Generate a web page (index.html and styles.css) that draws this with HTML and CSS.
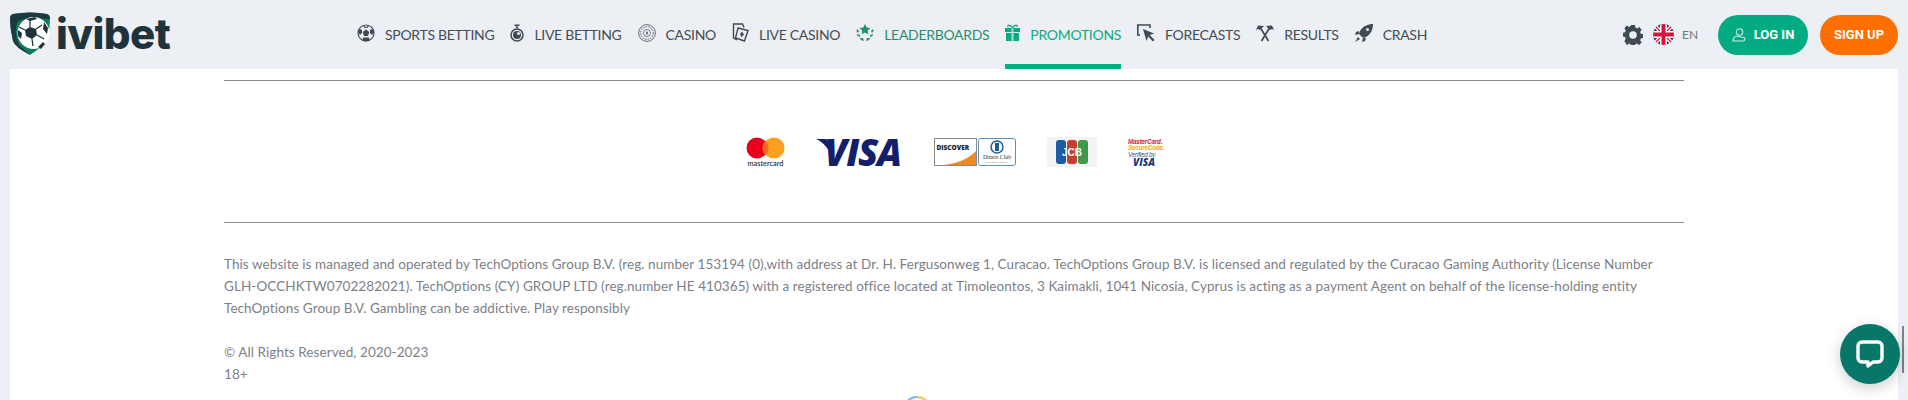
FILE: index.html
```html
<!DOCTYPE html>
<html lang="en">
<head>
<meta charset="utf-8">
<title>ivibet</title>
<link rel="stylesheet" href="styles.css">
</head>
<body>
<header class="header">
  <a class="logo">
    <svg class="logo-mark" viewBox="0 0 40 43" width="40" height="43">
      <path d="M3 2 Q20 -1 37 2 Q40 3 40 6 Q40 17 37 28 Q35 33 20 43 Q5 35 3 29 Q0 17 0 6 Q0 3 3 2Z" fill="#0c7a5d"/>
      <path d="M3 2 Q20 -1 37 2 Q40 3 40 7 L36 7 Q20 4 8 9 Q3 20 9 33 L20 43 Q5 35 3 29 Q0 17 0 6 Q0 3 3 2Z" fill="#1d3a40"/>
      <circle cx="23.500" cy="21" r="16" fill="#fff"/>
      <path d="M20 15 l6 2 l1 6 l-5 4 l-6 -3 l-1 -6Z" fill="#1f333d"/>
      <path d="M26 17 l6 -4 M15 18 l-6 -3 M22 27 l1 7 M27 23 l7 4 M20 15 l0 -8" stroke="#1f333d" stroke-width="1.300"/>
      <path d="M16 7 l9 -2 l2 2 l-7 2Z M34 10 l4 6 l-1 6 l-4 -5Z M8 18 l4 3 l-1 6 l-3 -3Z M28 35 l5 -5 l2 2 l-4 5Z" fill="#1f333d"/>
    </svg>
    <span class="logo-text">ivibet</span>
  </a>
  <nav class="nav">
    <a class="nav-item">
      <svg class="ic" viewBox="0 0 18 18" width="18" height="18"><circle cx="9" cy="9" r="8" fill="none" stroke="#3f4a52" stroke-width="1.200"/><path d="M9 5.500l3.300 2.400-1.300 4h-4l-1.300-4Z" fill="#3f4a52"/><path d="M6 1.500L9 3l3-1.500-1 2-2 .5-2-.5Z M1 8l2-3 2 1v3l-2 2Z M17 8l-2-3-2 1v3l2 2Z M5.500 16.500l.5-3h6l.5 3L9 17.500Z" fill="#3f4a52"/></svg>
      <span>SPORTS BETTING</span>
    </a>
    <a class="nav-item">
      <svg class="ic ic-live" viewBox="0 0 14 18" width="14" height="18"><circle cx="7" cy="11" r="6" fill="none" stroke="#3f4a52" stroke-width="1.500"/><circle cx="7" cy="11" r="4" fill="#3f4a52"/><circle cx="8.500" cy="9.500" r="1.600" fill="#eceff3"/><path d="M4.500 1.200h5M7 1v3.500" stroke="#3f4a52" stroke-width="1.500"/></svg>
      <span>LIVE BETTING</span>
    </a>
    <a class="nav-item">
      <svg class="ic" viewBox="0 0 18 18" width="18" height="18"><circle cx="9" cy="9" r="8.400" fill="none" stroke="#555e65" stroke-width=".9"/><circle cx="9" cy="9" r="6.300" fill="none" stroke="#555e65" stroke-dasharray="1.500 1"/><circle cx="9" cy="9" r="3.500" fill="none" stroke="#555e65" stroke-width=".8"/><path d="M9 7l1 2-1 2-1-2Z" fill="#3f4a52"/></svg>
      <span>CASINO</span>
    </a>
    <a class="nav-item">
      <svg class="ic ic-cards" viewBox="0 0 17 19" width="17" height="19"><path d="M5 17L1.500 15V1H10.500L12 4.500" fill="none" stroke="#3f4a52" stroke-width="1.400"/><path d="M6 5l10 2.500L12.500 18 3.500 15Z" fill="none" stroke="#3f4a52" stroke-width="1.400"/><path d="M10 8.500l2 3-2.500 2.500-1.500-3Z" fill="#3f4a52"/></svg>
      <span>LIVE CASINO</span>
    </a>
    <a class="nav-item nav-item-lead">
      <svg class="ic" viewBox="0 0 18 18" width="18" height="18"><path d="M9 0l1.700 3.400 3.700.5-2.700 2.600.7 3.700L9 8.500l-3.400 1.700.7-3.700L3.600 3.900l3.700-.5Z" fill="#1f9070"/><path d="M1 5l2 2-1 2-1.500-2Z M17 5l-2 2 1 2 1.500-2Z M1 10l3 1 0 2-2.500-1Z M17 10l-3 1 0 2 2.500-1Z M4 14l3 0 1 3-3-1Z M14 14l-3 0-1 3 3-1Z" fill="#1f9070"/></svg>
      <span>LEADERBOARDS</span>
    </a>
    <a class="nav-item nav-item-active">
      <svg class="ic ic-gift" viewBox="0 0 15 17" width="15" height="17"><path d="M0 4h15v4H0Z M1 9h13v8H1Z" fill="#0bab81"/><path d="M6.500 4h2v13h-2Z" fill="#a5e0cf"/><path d="M7.500 4C5 0 2 1 3 3M7.500 4C10 0 13 1 12 3" stroke="#0bab81" stroke-width="1.300" fill="none"/></svg>
      <span>PROMOTIONS</span>
    </a>
    <a class="nav-item">
      <svg class="ic" viewBox="0 0 18 18" width="18" height="18"><path d="M3 11H.800V1H13v3" fill="none" stroke="#3f4a52" stroke-width="1.600"/><path d="M6 5l11 4.500-4.300 1.600 4.800 5-1.500 1.500-4.800-5L9.500 17Z" fill="#3f4a52"/></svg>
      <span>FORECASTS</span>
    </a>
    <a class="nav-item">
      <svg class="ic" viewBox="0 0 18 18" width="18" height="18"><path d="M4.500 4L12.500 17M13.500 4L5.500 17" stroke="#3f4a52" stroke-width="1.700"/><path d="M0 6L2 1.500 8 2 7 3 4 6 2 5Z M18 6l-2-4.500L10 2l1 1 3 3 2-1Z" fill="#3f4a52"/></svg>
      <span>RESULTS</span>
    </a>
    <a class="nav-item">
      <svg class="ic" viewBox="0 0 18 18" width="18" height="18"><path d="M5 7C8 2 13 0 18 0 18 5 16 10 11 13L8 14 4 10Z" fill="#3f4a52"/><circle cx="12.500" cy="5.500" r="1.500" fill="#eceff3"/><path d="M4 7L1 8l-1 3 4-1Z M11 14l-1 3-3 1 1-4Z M3 13l-3 5 5-3Z" fill="#3f4a52"/></svg>
      <span>CRASH</span>
    </a>
  </nav>
  <div class="tools">
    <svg class="gear" viewBox="0 0 20 20" width="20" height="20"><path d="M8 0h4l.5 2.600 1.800.8 2.300-1.500 2.500 2.800-1.600 2.200.8 1.900 2.700.4v3.700l-2.700.5-.8 1.800 1.600 2.300-2.800 2.600-2.200-1.600-1.800.8-.4 2.700H8l-.5-2.700-1.800-.8-2.200 1.600L.9 16l1.500-2.300-.8-1.800L-1 11.400V7.700l2.600-.4.8-1.900L.9 3.200l2.600-2.800 2.200 1.500 1.800-.8Z" transform="translate(0.500 0) scale(.95 1)" fill="#3f4a52"/><circle cx="10" cy="10" r="3.800" fill="#eceff3"/></svg>
    <svg class="flag" viewBox="0 0 21 21" width="21" height="21">
      <defs><clipPath id="flagclip"><circle cx="10.500" cy="10.500" r="10.500"/></clipPath></defs>
      <g clip-path="url(#flagclip)">
        <rect width="21" height="21" fill="#25356f"/>
        <path d="M0 0L21 21M21 0L0 21" stroke="#fff" stroke-width="4"/>
        <path d="M0 0L21 21M21 0L0 21" stroke="#d3173b" stroke-width="1.300"/>
        <path d="M10.500 0V21M0 10.500H21" stroke="#fff" stroke-width="7"/>
        <path d="M10.500 0V21M0 10.500H21" stroke="#d3173b" stroke-width="4"/>
      </g>
    </svg>
    <span class="lang">EN</span>
    <a class="btn btn-login">
      <svg viewBox="0 0 14 14" width="14" height="14"><circle cx="7.500" cy="4" r="3.200" fill="none" stroke="#cfeee5" stroke-width="1.100"/><path d="M1 13c0-3 2-5 4-5l4 1 3 .5c1.500 1 1 3.500-1 3.500Z" fill="none" stroke="#cfeee5" stroke-width="1.100"/></svg>
      <span>LOG IN</span>
    </a>
    <a class="btn btn-signup">SIGN UP</a>
  </div>
</header>
<main class="main">
  <div class="container">
    <hr class="rule">
    <div class="payments">
      <svg class="pay" viewBox="0 0 39 30" width="39" height="30">
        <circle cx="11" cy="11" r="10.500" fill="#eb001b"/>
        <circle cx="28" cy="11" r="10.500" fill="#f9a01f"/>
        <path d="M19.500 3.600a10.500 10.500 0 0 1 0 14.800a10.500 10.500 0 0 1 0-14.800Z" fill="#f26a1b"/>
        <text x="19.500" y="28.500" class="t-mc" text-anchor="middle">mastercard</text>
      </svg>
      <svg class="pay" viewBox="0 -12 87 52" width="87" height="52">
        <path d="M0 1h9c2 0 3 1 3.500 3L16 21C14 11 7 4 0 1Z" fill="#141f6b"/>
        <text x="8.500" y="27.500" class="t-visa">VISA</text>
      </svg>
      <div class="pay-pair">
        <svg viewBox="0 0 43 28" width="43" height="28">
          <rect x=".5" y=".5" width="42" height="27" fill="#fff" stroke="#8a8a8a"/>
          <path d="M42 13V27H10Q32 24 42 13Z" fill="#f08a24"/>
          <text x="2.500" y="12" class="t-disc">DISCOVER</text>
        </svg>
        <svg viewBox="0 0 38 28" width="38" height="28">
          <rect x=".5" y=".5" width="37" height="27" rx="2" fill="#fff" stroke="#5b8fb5"/>
          <circle cx="19" cy="9" r="6" fill="#fff" stroke="#1d5d99" stroke-width="1.500"/>
          <rect x="17" y="5" width="4" height="8" fill="#1d5d99"/>
          <text x="19" y="20.500" class="t-din" text-anchor="middle">Diners Club</text>
          <text x="19" y="25" class="t-din2" text-anchor="middle">INTERNATIONAL</text>
        </svg>
      </div>
      <svg class="pay" viewBox="0 0 50 30" width="50" height="30">
        <rect width="50" height="30" rx="2" fill="#f3f3f3"/>
        <rect x="9" y="3" width="10" height="24" rx="3" fill="#1d5aa5"/>
        <rect x="20" y="3" width="10" height="24" rx="3" fill="#c6402f"/>
        <rect x="31" y="3" width="10" height="24" rx="3" fill="#3c9a4b"/>
        <text x="25" y="19" class="t-jcb" text-anchor="middle">JCB</text>
      </svg>
      <svg class="pay pay-sc" viewBox="-4 -6 42 42" width="42" height="42">
        <text x="0" y="6.500" class="t-sc t-sc-red">MasterCard.</text>
        <text x="0" y="13" class="t-sc t-sc-yel">SecureCode.</text>
        <text x="0" y="20" class="t-sc t-sc-blue">Verified by</text>
        <text x="5" y="29" class="t-sc-visa">VISA</text>
      </svg>
    </div>
    <hr class="rule">
    <div class="legal">
      <p class="legal-main">This website is managed and operated by TechOptions Group B.V. (reg. number 153194 (0),with address at Dr. H. Fergusonweg 1, Curacao. TechOptions Group B.V. is licensed and regulated by the Curacao Gaming Authority (License Number GLH-OCCHKTW0702282021). TechOptions (CY) GROUP LTD (reg.number HE 410365) with a registered office located at Timoleontos, 3 Kaimakli, 1041 Nicosia, Cyprus is acting as a payment Agent on behalf of the license-holding entity TechOptions Group B.V. Gambling can be addictive. Play responsibly</p>
      <p class="legal-copy">© All Rights Reserved, 2020-2023</p>
      <p class="legal-copy">18+</p>
    </div>
    <div class="seal-row">
      <svg viewBox="0 0 28 28" width="28" height="28"><circle cx="14" cy="14" r="13" fill="#fff" stroke="#6db8ea" stroke-width="2"/><path d="M14 1a13 13 0 0 1 12 8" fill="none" stroke="#f3cf6b" stroke-width="2.500"/></svg>
    </div>
  </div>
</main>
<div class="scroll-thumb"></div>
<button class="chat" aria-label="Chat">
  <svg viewBox="0 0 30 30" width="30" height="30"><path d="M7 3h16a4 4 0 0 1 4 4v12a4 4 0 0 1-4 4h-5l-5 4v-4H7a4 4 0 0 1-4-4V7a4 4 0 0 1 4-4Z" fill="none" stroke="#fff" stroke-width="3.400" stroke-linejoin="round"/></svg>
</button>
</body>
</html>
```
FILE: styles.css
```css
* { box-sizing: border-box; }
html, body { margin: 0; height: 400px; overflow: hidden; }
body { background: #eceff3; font-family: Lato, "Open Sans", sans-serif; position: relative; }

.header { height: 69px; display: flex; align-items: center; padding: 0 10px; }
.logo { display: flex; align-items: center; gap: 6px; width: 347px; margin-top: -2px; }
.logo-mark { flex: none; }
.logo-text { font-family: Inter, sans-serif; font-weight: 800; font-size: 42px; line-height: 1; letter-spacing: -.6px; color: #1f333d; }

.nav { display: flex; height: 69px; gap: 16px; }
.nav-item { display: flex; align-items: center; gap: 10px; height: 69px; font-size: 14px; letter-spacing: -.3px; color: #444d54; border-bottom: 5px solid transparent; padding-top: 5px; white-space: nowrap; }
.nav-item .ic { flex: none; margin-top: -4px; }
.nav-item-lead { color: #1f9070; }
.nav-item-active { color: #0bab81; border-bottom-color: #04ab82; }

.tools { margin-left: auto; display: flex; align-items: center; }
.gear { margin-right: 10px; }
.flag { margin-right: 8px; }
.lang { font-size: 12px; color: #6f767d; width: 36px; }
.btn { height: 40px; border-radius: 20px; display: flex; align-items: center; justify-content: center; gap: 8px; font-family: Roboto, sans-serif; font-weight: 700; font-size: 13px; color: #fff; }
.btn-login { width: 90px; background: #04ab82; margin-right: 12px; }
.btn-signup { width: 78px; background: #ff6f00; }

.main { background: #fff; margin: 0 10px; height: 331px; overflow: hidden; }
.container { margin: 0 214px; padding-top: 11px; }
.rule { margin: 0; border: 0; height: 1px; background: #858a94; }
.payments { height: 141px; display: flex; align-items: center; justify-content: center; gap: 31px; }
.pay-pair { display: flex; gap: 1px; }
.pay-sc { margin: 0 -4px; }
.t-mc { font: 600 7.300px Lato, sans-serif; fill: #333; }
.t-visa { font: italic 800 37px "Open Sans", sans-serif; fill: #141f6b; letter-spacing: -1.200px; }
.t-disc { font: 800 6.500px "Open Sans", sans-serif; fill: #222; }
.t-din { font: 5.800px "Liberation Serif", serif; fill: #333; }
.t-din2 { font: 2.800px "Liberation Serif", serif; fill: #333; }
.t-jcb { font: 700 10px "Liberation Sans", sans-serif; fill: #fff; }
.t-sc { font: italic 700 6.300px "Liberation Sans", sans-serif; letter-spacing: -.2px; }
.t-sc-red { fill: #d8232a; }
.t-sc-yel { fill: #f5a623; }
.t-sc-blue { fill: #33578e; font-weight: 400; }
.t-sc-visa { font: italic 800 10px "Open Sans", sans-serif; fill: #1a3a7a; }

.legal { padding-top: 30px; font-size: 13.500px; line-height: 22px; color: #7d8087; letter-spacing: .07px; }
.legal p { margin: 0; }
.legal-main { max-width: 1440px; margin-bottom: 22px !important; }
.seal-row { display: flex; justify-content: center; padding: 11px 74px 0 0; }

.scroll-thumb { position: absolute; right: 4px; top: 326px; width: 2px; height: 47px; background: #7e8288; }
.chat { position: absolute; left: 1840px; top: 324px; width: 60px; height: 60px; border: 0; border-radius: 50%; padding: 0; background: #07776a; box-shadow: 0 4px 14px rgba(0,0,0,.2); display: flex; align-items: center; justify-content: center; }
```
